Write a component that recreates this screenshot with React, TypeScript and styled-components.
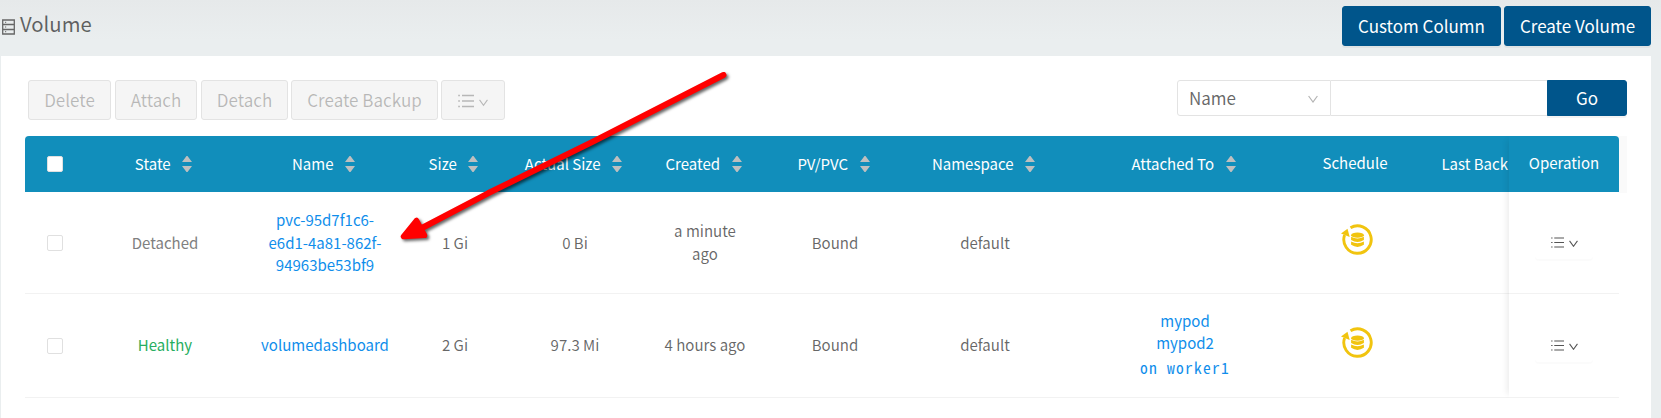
import React from "react";
import styled, { createGlobalStyle, css } from "styled-components";

const GlobalStyle = createGlobalStyle`
  * { box-sizing: border-box; }
  body {
    margin: 0;
    background: #eaeeef;
    color: rgba(0, 0, 0, 0.6);
    font-family: "Noto Sans CJK SC", sans-serif;
    font-size: 15px;
    line-height: 22.5px;
  }
`;

const Page = styled.div`
  position: relative;
  height: 418px;
  overflow: hidden;
  background: linear-gradient(#e6e9ea, #eaeeef 40px);
`;

const TopBar = styled.header`
  display: flex;
  justify-content: space-between;
  height: 56px;
  padding: 6px 10px 0 2px;
`;

const Title = styled.h1`
  display: flex;
  align-items: center;
  gap: 5px;
  height: 34px;
  margin: 0;
  font-size: 20.3px;
  font-weight: 400;
  svg { margin-top: 7px; }
`;

const Actions = styled.div`
  display: flex;
  gap: 3px;
`;

const Button = styled.button<{ $w: number; $primary?: boolean }>`
  display: flex;
  align-items: center;
  justify-content: center;
  gap: 5px;
  width: ${(p) => p.$w}px;
  height: 40px;
  padding: 1px 0 0;
  border: 1px solid #e3e3e3;
  border-radius: 3px;
  background: #f5f5f5;
  color: rgba(0, 0, 0, 0.25);
  font: inherit;
  font-size: 17px;
  ${(p) =>
    p.$primary &&
    css`
      padding: 0;
      border-color: #00558b;
      background: #00558b;
      color: #fff;
      box-shadow: 0 2px 0 rgba(0, 0, 0, 0.045);
    `}
`;

const MenuButton = styled(Button)`
  svg:last-child { margin-top: 5px; }
`;

const Panel = styled.main`
  width: 1650px;
  height: 362px;
  margin-left: 1px;
  padding: 24px 24px 0;
  background: #fff;
`;

const Toolbar = styled.div`
  display: flex;
  justify-content: space-between;
  height: 56px;
  padding-left: 3px;
`;

const BulkActions = styled.div`
  display: flex;
  gap: 4px;
  & > :nth-child(n + 4) { margin-left: -1px; }
`;

const Search = styled.div`
  display: flex;
  height: 36px;
`;

const Select = styled.div`
  display: flex;
  align-items: center;
  justify-content: space-between;
  width: 154px;
  padding: 1px 12px 0 11px;
  border: 1px solid #e3e3e3;
  border-radius: 3px 0 0 3px;
  font-size: 17px;
  svg { color: rgba(0, 0, 0, 0.3); }
`;

const SearchInput = styled.input`
  width: 216px;
  border: 1px solid #e3e3e3;
  border-width: 1px 0;
  padding: 0 11px;
  outline: none;
`;

const GoButton = styled(Button)`
  height: 36px;
  padding-top: 1px;
  border-radius: 0 3px 3px 0;
`;

const Table = styled.section`
  display: flex;
  width: 1602px;
  background: linear-gradient(#fafafa, #fafafa) 0 0 / 100% 57px no-repeat;
`;

const Scroller = styled.div`
  width: 1484px;
  overflow: hidden;
  border-top-left-radius: 4px;
`;

const FixedColumn = styled.div`
  position: relative;
  width: 110px;
  box-shadow: -6px 0 6px -4px rgba(0, 0, 0, 0.08);
  clip-path: inset(0 0 0 -12px);
  & > :first-child { border-top-right-radius: 4px; }
`;

const cols = "60px 160px 160px 100px 140px 120px 140px 160px 240px 100px 104px";

const Row = styled.div<{ $h: number; $head?: boolean; $single?: boolean }>`
  display: grid;
  grid-template-columns: ${(p) => (p.$single ? "110px" : cols)};
  width: ${(p) => (p.$single ? "110px" : "1484px")};
  height: ${(p) => p.$h}px;
  align-items: center;
  justify-items: center;
  text-align: center;
  background: ${(p) => (p.$head ? "#118ebb" : "#fff")};
  color: ${(p) => (p.$head ? "#fff" : "inherit")};
  border-bottom: ${(p) => (p.$head ? "0" : "1px solid #f2f2f2")};
`;

const HeadCell = styled.div`
  display: flex;
  align-items: center;
  gap: 11.5px;
  padding-right: 3px;
  white-space: nowrap;
`;

const Plain = styled.div`
  margin-top: -2px;
`;

const LastHead = styled.div`
  justify-self: end;
  padding-right: 1px;
  white-space: nowrap;
`;

const CheckBox = styled.span`
  width: 16px;
  height: 16px;
  border: 1px solid #e0e0e0;
  border-radius: 2px;
  background: #fff;
`;

const Cell = styled.div<{ $c?: string; $shift?: number }>`
  padding-top: ${(p) => p.$shift ?? 0}px;
  margin-top: -1px;
  color: ${(p) => p.$c ?? "inherit"};
`;

const AttachedCell = styled.div`
  padding-bottom: 3px;
`;

const Link = styled.a`
  display: block;
  color: #108eeb;
`;

const Pod = styled(Link)`
  line-height: 22px;
`;

const Mono = styled(Link)`
  margin-top: 2px;
  font-family: "Noto Sans Mono CJK SC", "Liberation Mono", monospace;
  font-size: 15.5px;
  letter-spacing: 1.25px;
`;

const ScheduleCell = styled.div`
  display: flex;
  padding: 0 0 6px 3px;
`;

const MoreButton = styled.span`
  display: flex;
  align-items: center;
  justify-content: center;
  gap: 5px;
  width: 58px;
  height: 32px;
  border-radius: 4px;
  color: #555;
  box-shadow: 0 2px 0 rgba(0, 0, 0, 0.015);
  svg:last-child { margin-top: 2px; }
`;

const Overlay = styled.svg`
  position: absolute;
  left: 390px;
  top: 60px;
  pointer-events: none;
`;

const VolumeIcon = () => (
  <svg width="13" height="16" viewBox="0 0 13 16" fill="none" stroke="#666">
    <path d="M.7 1h11.600v14H.7zM.5 5.500h12M.5 10.500h12" strokeWidth="1.300" />
    <path d="M3 3.300h1.200M3 8h1.200M3 12.700h1.200" />
  </svg>
);

const ListIcon = ({ w }: { w: number }) => (
  <svg width={w} height={w} viewBox="0 0 16 16" stroke="currentColor" strokeWidth="1.300">
    <path d="M4 2.500h12M4 8h12M4 13.500h12M.2 2.500h1.700M.2 8h1.700M.2 13.500h1.700" />
  </svg>
);

const Chevron = ({ w }: { w: number }) => (
  <svg width={w} height={w * 0.8} viewBox="0 0 10 8" fill="none" stroke="currentColor" strokeWidth="1.200">
    <path d="M.6 1 5 7 9.400 1" />
  </svg>
);

const Sorter = () => (
  <svg width="10" height="16" viewBox="0 0 10 16" fill="#bfbfbf">
    <path d="M0 6 4.500 0h1L10 6zM0 10h10L5.500 16h-1z" />
  </svg>
);

const BackupIcon = () => (
  <svg width="32" height="32" viewBox="0 0 32 32" fill="#f1c40f">
    <path d="M9.500 3.800A13.700 13.700 0 1 1 3.600 11" fill="none" stroke="#f1c40f" strokeWidth="2.900" />
    <path d="M0 9.500 6.500 4.800 8.700 13z" />
    <ellipse cx="16.500" cy="11.200" rx="6.400" ry="2.600" />
    <path d="M10.100 12.800q6.400 3.200 12.800 0v3.300q-6.400 3.800-12.800 0zM10.100 17.500q6.400 3.400 12.800 0v3.300q-6.400 4.200-12.800 0z" />
  </svg>
);

const sortable = ["State", "Name", "Size", "Actual Size", "Created", "PV/PVC", "Namespace", "Attached To"];

interface Volume {
  h: number;
  shift: number;
  state: string;
  color: string;
  name: React.ReactNode;
  size: string;
  actual: string;
  created: React.ReactNode;
  attached?: React.ReactNode;
}

const volumes: Volume[] = [
  {
    h: 102,
    shift: 1.5,
    state: "Detached",
    color: "#808080",
    name: <>pvc-95d7f1c6-<br />e6d1-4a81-862f-<br />94963be53bf9</>,
    size: "1 Gi",
    actual: "0 Bi",
    created: <>a minute<br />ago</>,
  },
  {
    h: 104,
    shift: 0,
    state: "Healthy",
    color: "#27ae60",
    name: "volumedashboard",
    size: "2 Gi",
    actual: "97.3 Mi",
    created: "4 hours ago",
    attached: (
      <>
        <Pod>mypod</Pod>
        <Pod>mypod2</Pod>
        <Mono>on worker1</Mono>
      </>
    ),
  },
];

export default function App() {
  return (
    <Page>
      <GlobalStyle />
      <TopBar>
        <Title><VolumeIcon />Volume</Title>
        <Actions>
          <Button $primary $w={159}>Custom Column</Button>
          <Button $primary $w={147}>Create Volume</Button>
        </Actions>
      </TopBar>
      <Panel>
        <Toolbar>
          <BulkActions>
            <Button $w={83}>Delete</Button>
            <Button $w={82}>Attach</Button>
            <Button $w={87}>Detach</Button>
            <Button $w={147}>Create Backup</Button>
            <MenuButton $w={64}><ListIcon w={16} /><Chevron w={9} /></MenuButton>
          </BulkActions>
          <Search>
            <Select>Name<Chevron w={10} /></Select>
            <SearchInput />
            <GoButton $primary $w={80}>Go</GoButton>
          </Search>
        </Toolbar>
        <Table>
          <Scroller>
            <Row $h={56} $head>
              <CheckBox />
              {sortable.map((t) => <HeadCell key={t}>{t}<Sorter /></HeadCell>)}
              <Plain>Schedule</Plain>
              <LastHead>Last Back</LastHead>
            </Row>
            {volumes.map((v) => (
              <Row key={v.state} $h={v.h}>
                <CheckBox />
                <Cell $shift={v.shift} $c={v.color}>{v.state}</Cell>
                <Cell $shift={v.shift}><Link>{v.name}</Link></Cell>
                <Cell $shift={v.shift}>{v.size}</Cell>
                <Cell $shift={v.shift}>{v.actual}</Cell>
                <Cell $shift={v.shift}>{v.created}</Cell>
                <Cell $shift={v.shift}>Bound</Cell>
                <Cell $shift={v.shift}>default</Cell>
                <AttachedCell>{v.attached}</AttachedCell>
                <ScheduleCell><BackupIcon /></ScheduleCell>
                <Cell />
              </Row>
            ))}
          </Scroller>
          <FixedColumn>
            <Row $h={56} $head $single><Plain>Operation</Plain></Row>
            {volumes.map((v) => (
              <Row key={v.state} $h={v.h} $single>
                <MoreButton><ListIcon w={13} /><Chevron w={9} /></MoreButton>
              </Row>
            ))}
          </FixedColumn>
        </Table>
      </Panel>
      <Overlay width="350" height="200" viewBox="390 60 350 200">
        <g filter="drop-shadow(2px 2px 1.5px rgba(0,0,0,.6))" stroke="red" strokeLinecap="round" strokeLinejoin="round" fill="none">
          <path d="M723.500 75 593 141.700 488 193.300 420 229" strokeWidth="6" />
          <path d="M416.500 220.500 403.500 236.500 424.500 235.300z" fill="red" strokeWidth="5.500" />
        </g>
      </Overlay>
    </Page>
  );
}
